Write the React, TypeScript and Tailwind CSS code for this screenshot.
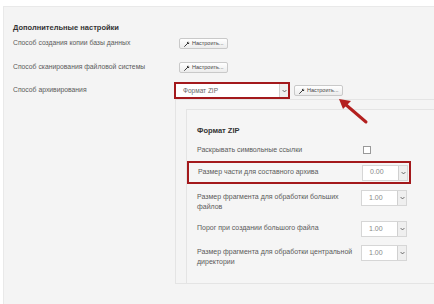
import React from 'react';

const font = { fontFamily: '"Liberation Sans", Arial, sans-serif' };

const Wrench = () => (
  <svg viewBox="0 0 10 10" className="w-[6px] h-[6px]">
    <path d="M1 9 L5.5 4.5" stroke="#333" strokeWidth="1.6" strokeLinecap="round" />
    <circle cx="6.8" cy="3.2" r="2" fill="#333" />
    <circle cx="7.6" cy="2.4" r="0.8" fill="#fff" />
  </svg>
);

const ConfigButton = () => (
  <button className="h-[11px] px-[4px] flex items-center gap-[2px] rounded-[2px] border border-[#c9c9c9] bg-gradient-to-b from-white to-[#ececec] text-[5.5px] text-[#444] leading-none">
    <Wrench />
    <span>Настроить...</span>
  </button>
);

const Chevron = () => (
  <svg viewBox="0 0 8 6" className="w-[5px] h-[4px]">
    <path d="M1 1.5 L4 4.5 L7 1.5" stroke="#555" strokeWidth="1.4" fill="none" />
  </svg>
);

const NumSelect = ({ value }: { value: string }) => (
  <div className="w-[46px] h-[16px] flex bg-white border border-[#d6d6d6]">
    <div className="flex-1 flex items-center pl-[7px] text-[7px] text-[#888]">{value}</div>
    <div className="w-[9px] flex items-center justify-center bg-[#efefef] border-l border-[#d0d0d0]">
      <Chevron />
    </div>
  </div>
);

const InnerRow = ({ label, value, tall }: { label: React.ReactNode; value: string; tall?: boolean }) => (
  <div className={`flex items-start ${tall ? 'h-[31px]' : 'h-[24px]'}`}>
    <div className="w-[164px] text-[7px] leading-[10px] text-[#5a5a5a] pt-[2px]">{label}</div>
    <NumSelect value={value} />
  </div>
);

export default function App() {
  return (
    <div className="w-[434px] h-[304px] bg-white overflow-hidden relative" style={font}>
      <div className="ml-[3px] mt-[6px] h-[298px] bg-[#f4f4f4] border-l border-t border-[#e9e9e9] pl-[9px]">
        <div className="pt-[16px] text-[7.5px] font-bold text-[#333] leading-[10px]">Дополнительные настройки</div>

        <div className="flex items-center mt-[5px] h-[11px]">
          <div className="w-[166px] text-[6.8px] text-[#5a5a5a]">Способ создания копии базы данных</div>
          <ConfigButton />
        </div>
        <div className="flex items-center mt-[13px] h-[11px]">
          <div className="w-[166px] text-[6.8px] text-[#5a5a5a]">Способ сканирования файловой системы</div>
          <ConfigButton />
        </div>
        <div className="flex items-center mt-[9px] h-[17px]">
          <div className="w-[161px] text-[6.8px] text-[#5a5a5a]">Способ архивирования</div>
          <div className="w-[116px] h-[17px] flex border-2 border-[#a3191c] bg-white">
            <div className="flex-1 flex items-center pl-[7px] text-[6.5px] text-[#666]">Формат ZIP</div>
            <div className="w-[9px] flex items-center justify-center bg-[#efefef] border-l border-[#d0d0d0]">
              <Chevron />
            </div>
          </div>
          <div className="ml-[4px]">
            <ConfigButton />
          </div>
        </div>

        <div className="ml-[162px] h-[185px] border-t border-l border-b border-[#e4e4e4] pl-[10px] pt-[9px]">
          <div className="h-[175px] border-l border-t border-b border-[#e4e4e4] bg-[#f5f5f5] pl-[10px]">
            <div className="pt-[16px] text-[7.5px] font-bold text-[#333] leading-[10px]">Формат ZIP</div>
            <div className="flex items-center mt-[9px] h-[10px]">
              <div className="w-[166px] text-[7px] text-[#5a5a5a]">Раскрывать символьные ссылки</div>
              <div className="w-[8px] h-[8px] bg-white border border-[#999]" />
            </div>
            <div className="-ml-[10px] w-[224px] mt-[6px] h-[23px] border-2 border-[#a3191c] flex items-center pl-[9px]">
              <div className="w-[164px] text-[7px] text-[#5a5a5a]">Размер части для составного архива</div>
              <NumSelect value="0.00" />
            </div>
            <div className="mt-[6px]">
              <InnerRow
                tall
                value="1.00"
                label={<>Размер фрагмента для обработки больших<br />файлов</>}
              />
              <InnerRow value="1.00" label="Порог при создании большого файла" />
              <InnerRow
                tall
                value="1.00"
                label={<>Размер фрагмента для обработки центральной<br />директории</>}
              />
            </div>
          </div>
        </div>
      </div>

      <svg className="absolute left-[335px] top-[95px] w-[40px] h-[32px]" viewBox="0 0 40 32">
        <path d="M31 27 L10 9" stroke="#b3201f" strokeWidth="3" strokeLinecap="round" />
        <path d="M4 4 L16 6 L8 14 Z" fill="#b3201f" />
      </svg>
    </div>
  );
}
